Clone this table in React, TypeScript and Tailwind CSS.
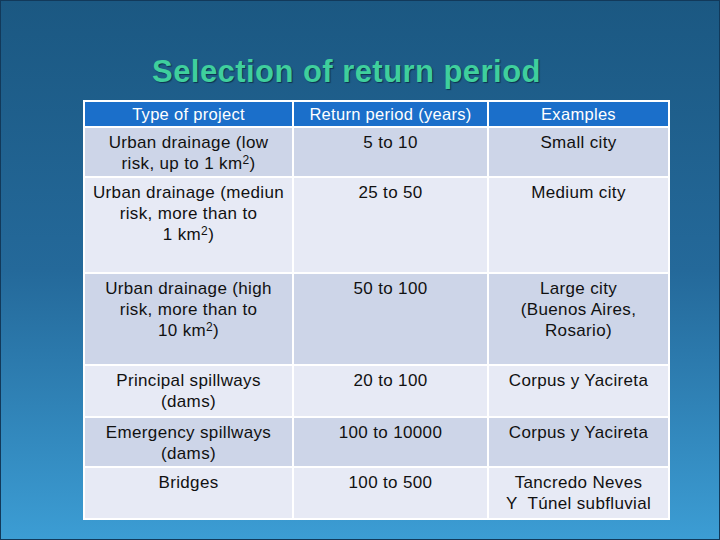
function Sup() {
  return <span className="text-[12px] relative -top-[5px] leading-none">2</span>;
}

const rows: { cells: React.ReactNode[]; dark: boolean }[] = [
  {
    dark: true,
    cells: [
      <>
        Urban drainage (low
        <br />
        risk, up to 1 km<Sup />)
      </>,
      "5 to 10",
      "Small city",
    ],
  },
  {
    dark: false,
    cells: [
      <>
        Urban drainage (mediun
        <br />
        risk, more than to
        <br />1 km<Sup />)
      </>,
      "25 to 50",
      "Medium city",
    ],
  },
  {
    dark: true,
    cells: [
      <>
        Urban drainage (high
        <br />
        risk, more than to
        <br />
        10 km<Sup />)
      </>,
      "50 to 100",
      <>
        Large city
        <br />
        (Buenos Aires,
        <br />
        Rosario)
      </>,
    ],
  },
  {
    dark: false,
    cells: [
      <>
        Principal spillways
        <br />
        (dams)
      </>,
      "20 to 100",
      "Corpus y Yacireta",
    ],
  },
  {
    dark: true,
    cells: [
      <>
        Emergency spillways
        <br />
        (dams)
      </>,
      "100 to 10000",
      "Corpus y Yacireta",
    ],
  },
  {
    dark: false,
    cells: [
      "Bridges",
      "100 to 500",
      <>
        Tancredo Neves
        <br />Y&nbsp; Túnel subfluvial
      </>,
    ],
  },
];

export default function App() {
  return (
    <div
      className="w-[720px] h-[540px] overflow-hidden border border-[#12395a] bg-gradient-to-b from-[#1b5882] via-[#24699a] to-[#3c9dd4]"
      style={{ fontFamily: '"Liberation Sans", Arial, sans-serif' }}
    >
      <div className="pl-[151px] pt-[52px] h-[99px]">
        <h1 className="text-[31px] font-bold leading-[38px] tracking-[0.45px] text-[#3fcf9d] [text-shadow:1px_1px_1px_#0d3350]">
          Selection of return period
        </h1>
      </div>
      <div className="ml-[82px] w-[587px] grid grid-cols-[207px_193px_179px] grid-rows-[24px_48px_94px_90px_50px_48px_50px] gap-[2px] p-[2px] bg-white text-[17px] leading-[21px] tracking-[0.35px] text-[#111]">
        {["Type of project", "Return period (years)", "Examples"].map((h) => (
          <div
            key={h}
            className="bg-[#1b6fca] text-white text-[16.5px] tracking-[0.3px] text-center leading-[24px]"
          >
            {h}
          </div>
        ))}
        {rows.map((r, i) =>
          r.cells.map((c, j) => (
            <div
              key={i + "-" + j}
              className={
                "text-center pt-[4px] " +
                (r.dark ? "bg-[#cdd5e8]" : "bg-[#e7eaf5]")
              }
            >
              {c}
            </div>
          ))
        )}
      </div>
    </div>
  );
}
